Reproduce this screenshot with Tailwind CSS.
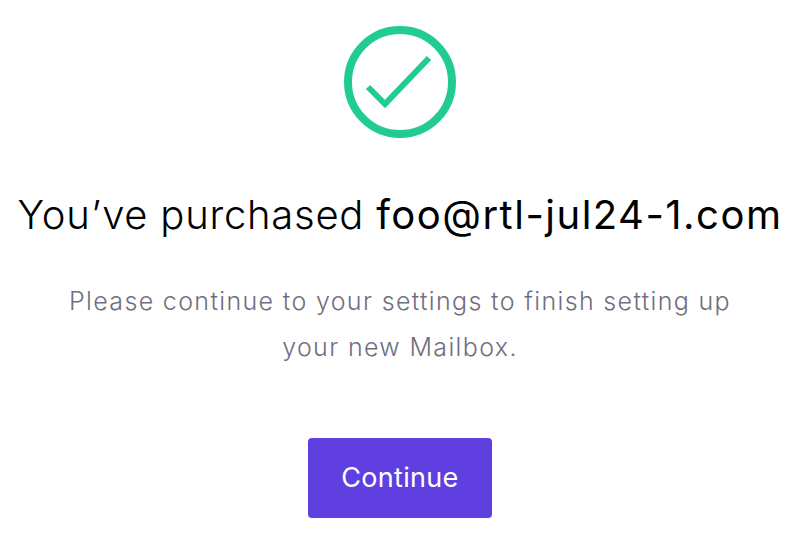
<!DOCTYPE html>
<html lang="en">
  <head>
    <meta charset="UTF-8" />
    <title>Purchased</title>
    <script src="https://cdn.jsdelivr.net/npm/@tailwindcss/browser@4"></script>
  </head>
  <body class="bg-white font-['Inter',sans-serif] h-[550px] overflow-hidden">
    <div class="w-[800px] flex flex-col items-center pt-[26px]">
      <svg class="w-[112px] h-[112px]" viewBox="0 0 112 112" fill="none">
        <circle cx="56" cy="56" r="52" stroke="#22CC90" stroke-width="8" />
        <path d="M24 61 L41 78 L85 32" stroke="#22CC90" stroke-width="6" />
      </svg>
      <h1 class="mt-[53px] text-[40px] leading-[48px] font-light tracking-[0.75px] text-black whitespace-nowrap">
        You’ve purchased <span class="font-normal tracking-[1.5px]">foo@rtl-jul24-1.com</span>
      </h1>
      <p class="mt-[39px] w-[700px] text-center text-[25px] leading-[46px] font-light tracking-[1.35px] text-[#6f6f80]">
        Please continue to your settings to finish setting up your new Mailbox.
      </p>
      <button class="mt-[68px] w-[184px] h-[80px] pt-[1px] rounded bg-[#5F3FE0] text-white text-[27px] tracking-[0.3px] font-normal">
        Continue
      </button>
    </div>
  </body>
</html>
